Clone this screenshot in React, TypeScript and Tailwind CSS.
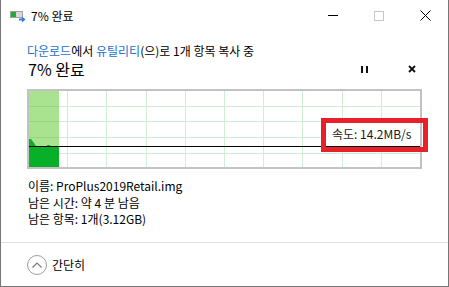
import React from 'react';

const vLines = [38, 77, 117, 156, 195, 234, 273, 313, 352];
const hLines = [15, 30, 46, 62];

function CopyIcon() {
  return (
    <svg width="16" height="11" viewBox="0 0 16 11">
      <rect x="0.5" y="0.5" width="12" height="6" fill="#d9d9d9" stroke="#a0a0a0" />
      <rect x="1" y="1" width="5" height="5" fill="#1fae2f" />
      <path d="M9 7.5h3V5.5l3.5 3-3.5 3V9.5H9z" fill="#2f7fd8" />
    </svg>
  );
}

function SpeedGraph() {
  return (
    <div className="relative w-[395px] h-[80px] border-2 border-[#c2c2c2] bg-white">
      <svg width="391" height="76" className="block">
        <rect x="0" y="0" width="30" height="76" fill="#a9e38f" />
        {vLines.map((x) => (
          <rect key={x} x={x} y="0" width="1" height="76" fill="#cdeed0" />
        ))}
        {hLines.map((y) => (
          <g key={y}>
            <rect x="30" y={y} width="361" height="1" fill="#cdeed0" />
            <rect x="0" y={y} width="30" height="1" fill="#95d67c" />
          </g>
        ))}
        <polygon
          points="0,48 2,48 5,52 7,55 18,55 18,54 21,54 21,55 30,55 30,76 0,76"
          fill="#08b02a"
        />
        <rect x="0" y="55" width="391" height="1" fill="#000" />
      </svg>

      {/* speed label */}
      <div className="absolute left-[296px] top-[31px] w-[95px] h-[24px] bg-white flex items-center pl-[7px] text-[12px] text-[#1a1a1a]">
        속도: 14.2MB/s
      </div>

      {/* annotation box */}
      <div className="absolute left-[292px] top-[27px] w-[107px] h-[34px] border-[5px] border-[#e8202a]" />
    </div>
  );
}

export default function App() {
  return (
    <div className="w-[449px] h-[287px] bg-white border-x border-b border-[#767676] flex flex-col font-['Noto_Sans_CJK_KR','Noto_Sans',sans-serif] text-black overflow-hidden">
      {/* Title bar */}
      <div className="h-[31px] flex items-center shrink-0">
        <div className="ml-[9px] w-[16px] flex items-center mt-[2px]">
          <CopyIcon />
        </div>
        <span className="ml-[5px] text-[12px] leading-[16px]">7% 완료</span>
        <div className="ml-auto flex items-center h-full">
          <div className="w-[46px] h-full flex items-center justify-center">
            <div className="w-[10px] h-px bg-black" />
          </div>
          <div className="w-[46px] h-full flex items-center justify-center">
            <div className="w-[10px] h-[10px] border border-[#c6c6c6]" />
          </div>
          <div className="w-[46px] h-full flex items-center justify-center">
            <svg width="11" height="11" viewBox="0 0 11 11">
              <path d="M0.5 0.5l10 10M10.5 0.5l-10 10" stroke="#000" strokeWidth="1" />
            </svg>
          </div>
        </div>
      </div>

      {/* Body */}
      <div className="px-[26px] flex flex-col">
        <div className="mt-[12px] h-[16px] text-[12px] leading-[16px] whitespace-nowrap">
          <span className="text-[#1a6fd0]">다운로드</span>
          에서 <span className="text-[#1a6fd0]">유틸리티</span>(으)로 1개 항목 복사 중
        </div>

        <div className="h-[20px] flex items-center">
          <span className="text-[16px] leading-[20px] ml-px">7% 완료</span>
          <div className="ml-auto flex items-center">
            <div className="flex gap-[3px] mr-[40px]">
              <div className="w-[2px] h-[7px] bg-[#111]" />
              <div className="w-[2px] h-[7px] bg-[#111]" />
            </div>
            <svg width="8" height="8" viewBox="0 0 8 8" className="mr-[6px]">
              <path d="M1 1l6 6M7 1l-6 6" stroke="#111" strokeWidth="1.8" />
            </svg>
          </div>
        </div>

        <div className="mt-[10px]">
          <SpeedGraph />
        </div>

        <div className="mt-[9px] text-[12px] leading-[16.5px] ml-px">
          <div>이름: ProPlus2019Retail.img</div>
          <div>남은 시간: 약 4 분 남음</div>
          <div>남은 항목: 1개(3.12GB)</div>
        </div>
      </div>

      {/* Footer */}
      <div className="mt-auto h-[44px] border-t border-[#dfdfdf] flex items-center px-[26px] shrink-0">
        <div className="w-[20px] h-[20px] rounded-full border border-[#9c9c9c] flex items-center justify-center">
          <svg width="10" height="6" viewBox="0 0 10 6">
            <path d="M0.5 5.5L5 1l4.5 4.5" fill="none" stroke="#7a7a7a" strokeWidth="1.2" />
          </svg>
        </div>
        <span className="ml-[5px] text-[12px] leading-[16px]">간단히</span>
      </div>
    </div>
  );
}
